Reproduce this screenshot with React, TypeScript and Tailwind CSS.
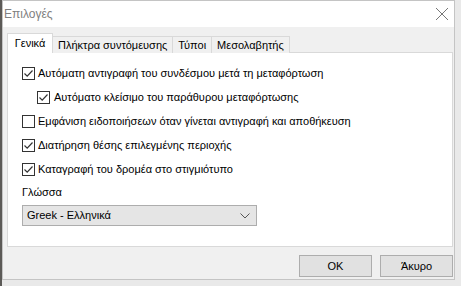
import React from 'react';

const font = { fontFamily: '"Liberation Sans", "Noto Sans", sans-serif' };

function Check({ checked }: { checked: boolean }) {
  return (
    <span className="w-[13px] h-[13px] border border-[#333333] bg-white flex items-center justify-center shrink-0">
      {checked && (
        <svg width="11" height="11" viewBox="0 0 11 11">
          <path d="M1.5 5.5 L4.2 8.2 L9.5 2.5" fill="none" stroke="#333333" strokeWidth="1.2" />
        </svg>
      )}
    </span>
  );
}

function Option({ label, checked, indent }: { label: string; checked: boolean; indent?: boolean }) {
  return (
    <div className={`flex items-center h-[24px] ${indent ? 'pl-[15px] gap-[4px]' : 'gap-[3px]'}`}>
      <Check checked={checked} />
      <span className="text-[11px] text-black leading-none">{label}</span>
    </div>
  );
}

const tabs = ['Πλήκτρα συντόμευσης', 'Τύποι', 'Μεσολαβητής'];

export default function App() {
  return (
    <div className="w-[461px] h-[286px] bg-[#e9e9e9] flex overflow-hidden" style={font}>
      <div className="w-[2px] h-full bg-[#5c5a57]" />
      <div className="w-[453px] h-[280px] border border-[#c4c4c4] flex flex-col bg-[#f0f0f0]">
        <div className="h-[26px] bg-white flex items-center justify-between pl-[1px] pr-[5px]">
          <span className="text-[12px] text-[#808080]">Επιλογές</span>
          <svg width="14" height="14" viewBox="0 0 14 14">
            <path d="M1 1 L13 13 M13 1 L1 13" stroke="#777777" strokeWidth="1" />
          </svg>
        </div>
        <div className="flex-1 flex flex-col pl-[4px] pr-[1px] pt-[6px]">
          <div className="flex items-end h-[20px] relative z-10">
            <div className="h-[20px] w-[46px] bg-white border border-[#d9d9d9] border-b-0 flex items-center justify-center text-[11px] text-black">
              Γενικά
            </div>
            {tabs.map((t) => (
              <div
                key={t}
                className="h-[17px] px-[5px] border border-[#d9d9d9] border-l-0 border-b-0 bg-[#f0f0f0] flex items-center text-[11px] text-black"
              >
                {t}
              </div>
            ))}
          </div>
          <div className="h-[195px] -mt-[1px] bg-white border border-[#d9d9d9] pl-[14px] pt-[8px]">
            <Option checked label="Αυτόματη αντιγραφή του συνδέσμου μετά τη μεταφόρτωση" />
            <Option checked indent label="Αυτόματο κλείσιμο του παράθυρου μεταφόρτωσης" />
            <Option checked={false} label="Εμφάνιση ειδοποιήσεων όταν γίνεται αντιγραφή και αποθήκευση" />
            <Option checked label="Διατήρηση θέσης επιλεγμένης περιοχής" />
            <Option checked label="Καταγραφή του δρομέα στο στιγμιότυπο" />
            <div className="text-[11px] text-black mt-[6px] leading-none">Γλώσσα</div>
            <div className="mt-[7px] w-[235px] h-[21px] bg-[#e5e5e5] border border-[#adadad] flex items-center justify-between pl-[4px] pr-[6px]">
              <span className="text-[11px] text-black">Greek - Ελληνικά</span>
              <svg width="10" height="6" viewBox="0 0 10 6">
                <path d="M0.5 0.5 L5 5 L9.5 0.5" fill="none" stroke="#555555" strokeWidth="1" />
              </svg>
            </div>
          </div>
          <div className="flex justify-end gap-[8px] mt-[8px]">
            <button className="w-[73px] h-[22px] bg-[#e1e1e1] border border-[#adadad] text-[11px] text-black">OK</button>
            <button className="w-[73px] h-[22px] bg-[#e1e1e1] border border-[#adadad] text-[11px] text-black">Άκυρο</button>
          </div>
        </div>
      </div>
    </div>
  );
}
